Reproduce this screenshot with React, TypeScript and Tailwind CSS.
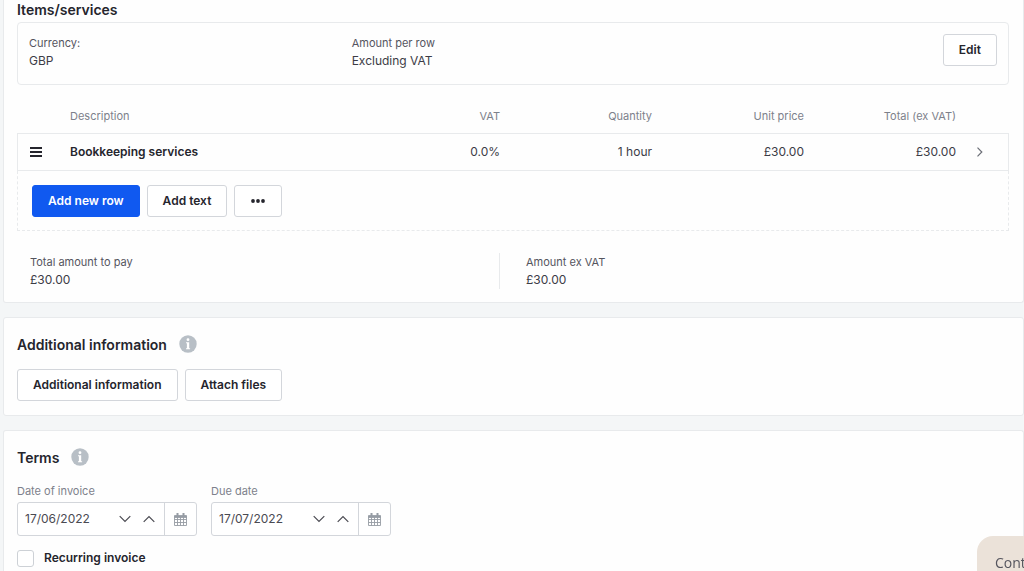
import type { ReactNode } from "react";

interface ButtonProps {
  children: ReactNode;
  label?: string;
  primary?: boolean;
}

function Button({ children, label, primary = false }: ButtonProps) {
  const tone = primary
    ? "border-[#1059f0] bg-[#1059f0] text-white"
    : "border-[#d3d6db] bg-white text-[#25252d]";

  return (
    <button
      type="button"
      aria-label={label}
      className={`flex h-8 shrink-0 items-center justify-center rounded-[3px] border px-[15px] text-[12px] font-semibold ${tone}`}
    >
      {children}
    </button>
  );
}

function Field({ label, value }: { label: string; value: string }) {
  return (
    <dl>
      <dt className="text-[11px] leading-[18px] text-[#55555e]">{label}</dt>
      <dd className="text-[12px] leading-[18px] text-[#3c3c46]">{value}</dd>
    </dl>
  );
}

function InfoIcon() {
  return (
    <svg width="18" height="18" viewBox="0 0 18 18" role="img" aria-label="Info">
      <circle cx="9" cy="9" r="8.7" fill="#b8bfc6" />
      <circle cx="9" cy="4.7" r="1.4" fill="#fff" />
      <path d="M7 7.200h3.200v6h.9v1H7v-1h.9v-5H7z" fill="#fff" />
    </svg>
  );
}

function SectionTitle({ children }: { children: ReactNode }) {
  return (
    <div className="mb-3 flex h-[26px] items-center gap-3">
      <h2 className="text-[14px] font-semibold text-[#25252d]">{children}</h2>
      <InfoIcon />
    </div>
  );
}

function CalendarIcon() {
  return (
    <svg width="13" height="13" viewBox="0 0 13 13" fill="none" stroke="#969ca4" aria-hidden>
      <path d="M.5 3.5h12v9H.5zM.5 6.5h12M.5 9.5h12M3.5 4v8.500M6.500 4v8.500M9.500 4v8.500" strokeWidth=".9" />
      <path d="M.5 2.500h12v2H.5z" fill="#969ca4" strokeWidth=".8" />
      <path d="M3.500 0v3.500M9.500 0v3.500" strokeWidth="2" />
    </svg>
  );
}

function DateField({ id, label, value }: { id: string; label: string; value: string }) {
  return (
    <div className="w-[180px]">
      <label htmlFor={id} className="mb-[2px] block text-[11px] leading-[18px] text-[#7d818b]">
        {label}
      </label>
      <div className="flex h-[34px] items-center rounded-[3px] border border-[#d3d6db] bg-white">
        <input
          id={id}
          type="text"
          defaultValue={value}
          className="w-[95px] bg-transparent pl-[7px] text-[12px] text-[#4a4a52] outline-none"
        />
        <button type="button" aria-label="Previous day" className="flex w-6 justify-center">
          <svg width="12" height="8" viewBox="0 0 12 8" fill="none" stroke="#4a4a52" strokeWidth="1.200">
            <path d="M.7 1.200 6 6.500l5.300-5.300" />
          </svg>
        </button>
        <button type="button" aria-label="Next day" className="flex w-6 justify-center">
          <svg width="12" height="8" viewBox="0 0 12 8" fill="none" stroke="#4a4a52" strokeWidth="1.200">
            <path d="M.7 6.800 6 1.500l5.300 5.300" />
          </svg>
        </button>
        <button
          type="button"
          aria-label="Open calendar"
          className="ml-auto flex h-full w-8 items-center justify-center border-l border-[#d3d6db]"
        >
          <CalendarIcon />
        </button>
      </div>
    </div>
  );
}

const columns = ["VAT", "Quantity", "Unit price", "Total (ex VAT)"];

const rows = [
  { description: "Bookkeeping services", cells: ["0.0%", "1 hour", "£30.00", "£30.00"] },
];

function ItemsTable() {
  return (
    <table className="w-full table-fixed border-separate border-spacing-0">
      <colgroup>
        <col className="w-[53px]" />
        <col />
        {columns.map((name) => (
          <col key={name} className="w-[152px]" />
        ))}
        <col className="w-[53px]" />
      </colgroup>
      <thead>
        <tr className="h-12 text-[11px] text-[#7d818b]">
          <th />
          <th className="pt-[14px] text-left font-normal">Description</th>
          {columns.map((name) => (
            <th key={name} className="pt-[14px] text-right font-normal">
              {name}
            </th>
          ))}
          <th />
        </tr>
      </thead>
      <tbody>
        {rows.map((row) => (
          <tr key={row.description} className="h-[38px] text-[12px] text-[#3c3c46]">
            <td className="border-y border-l border-[#e8eaec] pl-3">
              <svg width="12" height="10" viewBox="0 0 12 10" fill="#25252d" aria-hidden>
                <path d="M0 0h12v2H0zM0 4h12v2H0zM0 8h12v2H0z" />
              </svg>
            </td>
            <td className="border-y border-[#e8eaec] font-semibold text-[#25252d]">
              {row.description}
            </td>
            {row.cells.map((cell, i) => (
              <td key={columns[i]} className="border-y border-[#e8eaec] text-right">
                {cell}
              </td>
            ))}
            <td className="border-y border-r border-[#e8eaec] pl-5">
              <button type="button" aria-label="Open row" className="flex">
                <svg width="8" height="10" viewBox="0 0 8 10" fill="none" stroke="#6b6e76" strokeWidth="1.200">
                  <path d="M1.500.7 5.800 5 1.500 9.300" />
                </svg>
              </button>
            </td>
          </tr>
        ))}
      </tbody>
    </table>
  );
}

export default function App() {
  return (
    <main className="flex min-h-screen flex-col gap-[14px] bg-[#f4f6f7] pl-[3px] font-['Inter',sans-serif]">
      <section className="rounded-b-[3px] border border-t-0 border-[#e8eaec] bg-[#fefefe] pr-[14px] pb-[13px] pl-[13px]">
        <h2 className="mb-[2px] text-[14px] leading-5 font-semibold text-[#25252d]">Items/services</h2>

        <div className="grid grid-cols-3 rounded-[4px] border border-[#e8eaec] px-[11px] pt-[11px] pb-[14px]">
          <Field label="Currency:" value="GBP" />
          <Field label="Amount per row" value="Excluding VAT" />
          <div className="flex h-9 items-start justify-end">
            <Button>Edit</Button>
          </div>
        </div>

        <ItemsTable />

        <div className="flex gap-[7px] border border-t-0 border-dashed border-[#e8eaec] px-[14px] pt-[14px] pb-[13px]">
          <Button primary>Add new row</Button>
          <Button>Add text</Button>
          <Button label="More options">
            <svg width="16" height="4" viewBox="0 0 16 4" fill="#25252d" aria-hidden>
              <circle cx="3" cy="2" r="1.900" />
              <circle cx="8" cy="2" r="1.900" />
              <circle cx="13" cy="2" r="1.900" />
            </svg>
          </Button>
        </div>

        <div className="mt-[22px] grid grid-cols-2 gap-[26px]">
          <div className="border-r border-[#e8eaec] pl-[13px]">
            <Field label="Total amount to pay" value="£30.00" />
          </div>
          <Field label="Amount ex VAT" value="£30.00" />
        </div>
      </section>

      <section className="rounded-[3px] border border-[#e8eaec] bg-[#fefefe] px-[13px] pt-[13px] pb-[14px]">
        <SectionTitle>Additional information</SectionTitle>
        <div className="flex gap-[7px]">
          <Button>Additional information</Button>
          <Button>Attach files</Button>
        </div>
      </section>

      <section className="flex-1 rounded-t-[3px] border border-b-0 border-[#e8eaec] bg-[#fefefe] px-[13px] pt-[13px]">
        <SectionTitle>Terms</SectionTitle>
        <div className="flex gap-[14px]">
          <DateField id="invoice-date" label="Date of invoice" value="17/06/2022" />
          <DateField id="due-date" label="Due date" value="17/07/2022" />
        </div>
        <label className="mt-[13px] flex w-fit items-center gap-[10px] text-[12px] leading-[18px] font-semibold text-[#25252d]">
          <input
            type="checkbox"
            className="size-[17px] appearance-none rounded-[3px] border border-[#cdd1d6] bg-white checked:bg-[#1059f0]"
          />
          Recurring invoice
        </label>
      </section>

      <button
        type="button"
        className="fixed right-0 bottom-0 h-[35px] w-[47px] rounded-tl-[16px] bg-[#ebe2d9] pt-[18px] pl-[18px] text-left font-['Open_Sans',sans-serif] text-[14px] leading-[18px] text-[#55555e]"
      >
        Cont
      </button>
    </main>
  );
}
